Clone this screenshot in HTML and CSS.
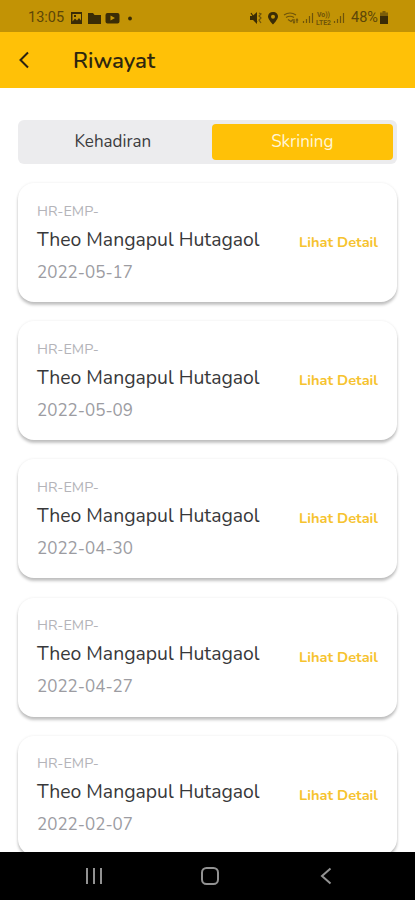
FILE: index.html
```
<!DOCTYPE html>
<html lang="id">
<head>
  <meta charset="UTF-8">
  <meta name="viewport" content="width=device-width, initial-scale=1">
  <title>Riwayat</title>
  <link rel="stylesheet" href="styles.css">
</head>
<body>

  <div class="status-bar">
    <span class="clock">13:05</span>
    <svg class="status-left" width="64" height="14" viewBox="0 0 64 14">
      <path fill-rule="evenodd" d="M1 1h11v12H1zM2.500 3v7.500l2.500-3 2 2 2-2.500 2 2.500V3zM4 4h2v2H4z"/>
      <path d="M18 2h5l1.500 2H31v9H18z"/>
      <path fill-rule="evenodd" d="M37.500 2h10q2 0 2 2v6.500q0 2-2 2h-10q-2 0-2-2V4q0-2 2-2zM40.500 4.500v5l4.500-2.500z"/>
      <circle cx="60" cy="7.500" r="1.900"/>
    </svg>
    <svg class="status-right" width="100" height="16" viewBox="0 0 100 16">
      <path d="M1 6h2.500L8 2v12l-4-4H1z"/>
      <path class="line" d="M2 3l6 9"/>
      <path class="line soft" d="M10 3l2 1-2 2 2 2-2 2 2 3"/>
      <path fill-rule="evenodd" d="M24 2c-3 0-5 2-5 4.500 0 3 5 8 5 8s5-5 5-8C29 4 27 2 24 2zm0 2.700a2 2 0 1 1 0 4 2 2 0 0 1 0-4z"/>
      <path class="line soft" d="M35 5q6-4 12 0M37 7.500q4-2.500 8 0M39 9.500l3 2 2-2M45 9v4M44 11.500l1 1.500 1-1.500M48 13V9M47 10.500l1-1.500 1 1.500"/>
      <path class="line soft" d="M54.500 13v-2M57.500 13V9M60.500 13V6M63.500 13V3M85.500 13v-2M88.500 13V9M91.500 13V6M94.500 13V3"/>
      <text x="68" y="6.500" textLength="13" lengthAdjust="spacingAndGlyphs">Vo))</text>
      <text x="67" y="14.500" textLength="15" lengthAdjust="spacingAndGlyphs">LTE2</text>
    </svg>
    <span class="battery-text">48%</span>
    <svg class="battery" width="8" height="13" viewBox="0 0 8 13">
      <path class="empty" d="M2.500 0h3v1.500H8V6H0V1.500h2.500z"/>
      <path d="M0 5h8v8H0z"/>
    </svg>
  </div>

  <header class="app-bar">
    <svg class="back" width="12" height="18" viewBox="0 0 12 18">
      <path d="M10 1.500L2.500 9l7.500 7.500"/>
    </svg>
    <h1>Riwayat</h1>
  </header>

  <main class="content">
    <div class="tabs">
      <div class="tab">Kehadiran</div>
      <div class="tab active">Skrining</div>
    </div>

    <div class="card">
      <div class="info">
        <p class="code">HR-EMP-</p>
        <p class="name">Theo Mangapul Hutagaol</p>
        <p class="date">2022-05-17</p>
      </div>
      <span class="detail">Lihat Detail</span>
    </div>

    <div class="card">
      <div class="info">
        <p class="code">HR-EMP-</p>
        <p class="name">Theo Mangapul Hutagaol</p>
        <p class="date">2022-05-09</p>
      </div>
      <span class="detail">Lihat Detail</span>
    </div>

    <div class="card">
      <div class="info">
        <p class="code">HR-EMP-</p>
        <p class="name">Theo Mangapul Hutagaol</p>
        <p class="date">2022-04-30</p>
      </div>
      <span class="detail">Lihat Detail</span>
    </div>

    <div class="card">
      <div class="info">
        <p class="code">HR-EMP-</p>
        <p class="name">Theo Mangapul Hutagaol</p>
        <p class="date">2022-04-27</p>
      </div>
      <span class="detail">Lihat Detail</span>
    </div>

    <div class="card">
      <div class="info">
        <p class="code">HR-EMP-</p>
        <p class="name">Theo Mangapul Hutagaol</p>
        <p class="date">2022-02-07</p>
      </div>
      <span class="detail">Lihat Detail</span>
    </div>
  </main>

  <nav class="nav-bar">
    <svg width="18" height="18" viewBox="0 0 18 18"><path d="M2 1v16M9 1v16M16 1v16"/></svg>
    <svg width="20" height="20" viewBox="0 0 20 20"><rect x="2" y="2" width="16" height="16" rx="4.500"/></svg>
    <svg width="18" height="18" viewBox="0 0 18 18"><path d="M13.500 1.500L5 9l8.500 7.500"/></svg>
  </nav>

</body>
</html>
```
FILE: styles.css
```
* {
  box-sizing: border-box;
}
body {
  margin: 0;
  height: 900px;
  display: flex;
  flex-direction: column;
  overflow: hidden;
  background: #fff;
  font-family: Nunito, "Noto Sans", sans-serif;
}
h1, p {
  margin: 0;
}

/* system status bar */
.status-bar {
  flex: none;
  height: 32px;
  display: flex;
  align-items: center;
  padding: 3px 27px 0 28px;
  background: #c29305;
  color: #5c4608;
  font-family: Roboto, sans-serif;
  font-size: 14.5px;
}
.status-bar svg {
  fill: #3a2c06;
}
.clock {
  width: 42px;
}
.status-right {
  margin-left: auto;
}
.status-right .line {
  fill: none;
  stroke: #3a2c06;
  stroke-width: 1.2;
}
.status-right .soft {
  stroke: #6e540a;
}
.status-right text {
  fill: #6e540a;
  font-size: 6.5px;
  font-weight: bold;
}
.battery-text {
  width: 29px;
  margin-left: 2px;
}
.battery .empty {
  fill: #7b5e09;
}

.app-bar {
  flex: none;
  height: 56px;
  display: flex;
  align-items: center;
  padding-left: 18px;
  background: #ffc107;
}
.back {
  fill: none;
  stroke: #2b2310;
  stroke-width: 2;
}
.app-bar h1 {
  margin-left: 43px;
  padding-top: 1px;
  font-size: 22.2px;
  font-weight: 600;
  line-height: 28px;
  color: #2e260f;
}

.content {
  flex: 1;
  min-height: 0;
  overflow: hidden;
  padding: 32px 18px 0;
}
.tabs {
  display: flex;
  gap: 8px;
  height: 44px;
  padding: 4px;
  margin-bottom: 19px;
  border-radius: 6px;
  background: #ececee;
}
.tab {
  flex: 1;
  border-radius: 4px;
  line-height: 36px;
  text-align: center;
  font-size: 17px;
  color: #3c3c3e;
}
.tab.active {
  background: #ffc107;
  color: #fff6d8;
}

.card {
  display: flex;
  justify-content: space-between;
  align-items: center;
  height: 119px;
  padding: 0 19px;
  margin-bottom: 19.2px;
  border-radius: 16px;
  background: #fff;
  box-shadow: 0 3px 3px rgba(0,0,0,0.23), 0 0 3px rgba(0,0,0,0.08);
}
.info {
  padding-top: 3px;
}
.code {
  font-size: 14.4px;
  line-height: 22px;
  color: #b4b4b9;
}
.name {
  font-size: 19.4px;
  line-height: 35px;
  color: #38383a;
}
.date {
  font-size: 17px;
  line-height: 32px;
  color: #9c9ca2;
}
.detail {
  padding-bottom: 1px;
  font-size: 14.6px;
  font-weight: 700;
  color: #f6c32f;
}

/* system navigation */
.nav-bar {
  flex: none;
  height: 48px;
  display: flex;
  align-items: center;
  justify-content: space-between;
  padding: 0 80px 0 85px;
  background: #000;
}
.nav-bar svg {
  fill: none;
  stroke: #929292;
  stroke-width: 2;
}
```
